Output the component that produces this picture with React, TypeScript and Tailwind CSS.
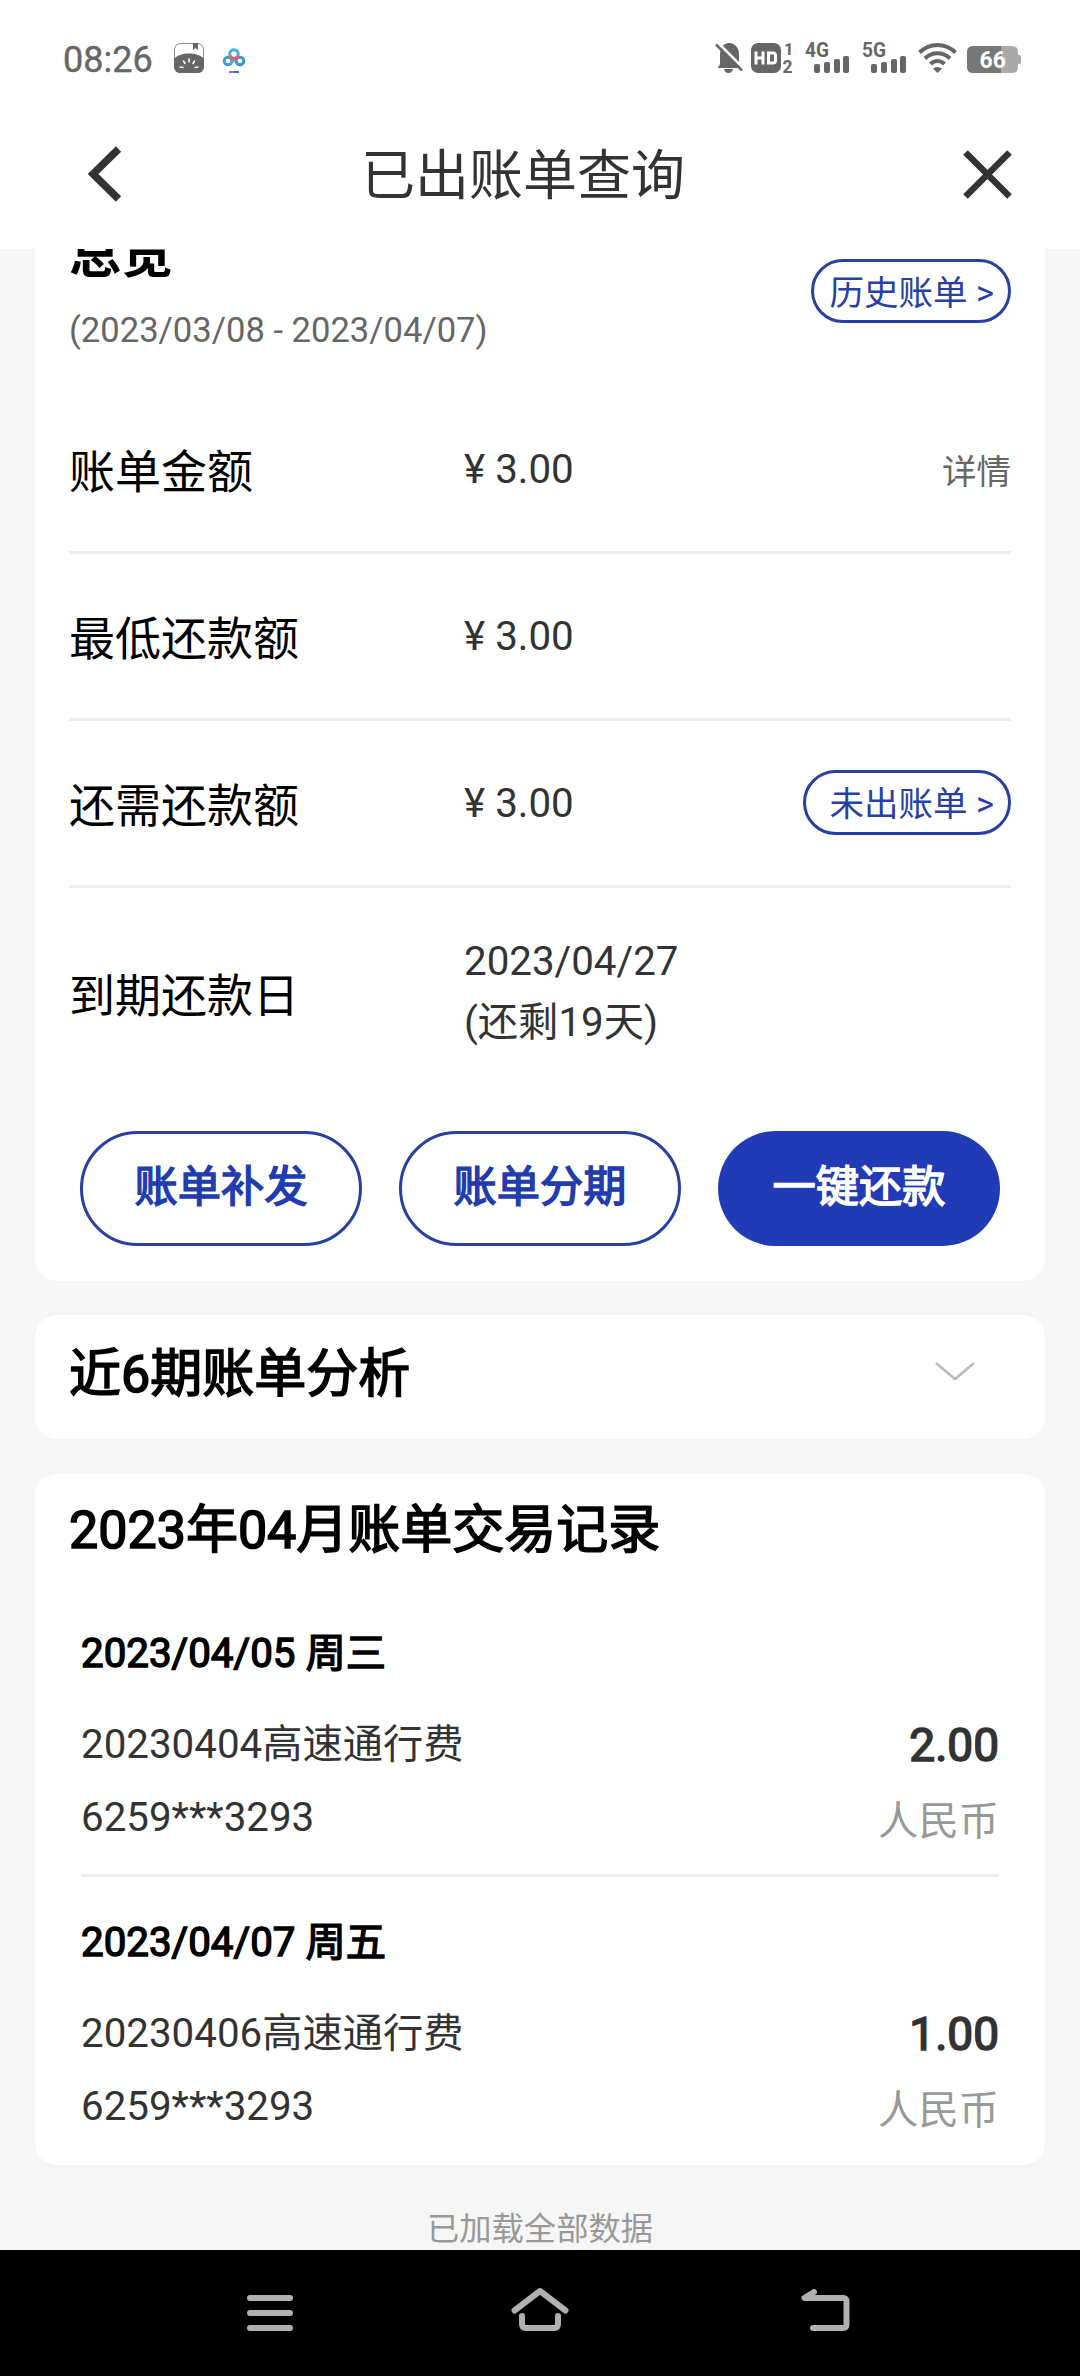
import type { ReactNode } from 'react'

const rows = [
  { label: '账单金额', value: '¥ 3.00', extra: 'detail' },
  { label: '最低还款额', value: '¥ 3.00', extra: '' },
  { label: '还需还款额', value: '¥ 3.00', extra: 'pending' },
]

const records = [
  { date: '2023/04/05 周三', name: '20230404高速通行费', amount: '2.00', card: '6259***3293' },
  { date: '2023/04/07 周五', name: '20230406高速通行费', amount: '1.00', card: '6259***3293' },
]

function Signal({ label }: { label: string }) {
  return (
    <svg className="h-[30px] w-[45px] overflow-visible" viewBox="0 0 45 30" fill="#666">
      <text x="0" y="14" fontSize="19.500" fontWeight="700" fontFamily="Roboto, sans-serif" textLength="24" lengthAdjust="spacingAndGlyphs">{label}</text>
      <rect x="9" y="21" width="6" height="9" rx="2" />
      <rect x="19" y="19" width="6" height="11" rx="2" />
      <rect x="29" y="16" width="6" height="14" rx="2" />
      <rect x="38" y="13" width="6" height="17" rx="2" />
    </svg>
  )
}

function StatusBar() {
  return (
    <div className="flex h-[100px] items-start pl-[63px] pr-[59px] pt-[43px]">
      <span className="mt-[-1px] h-[34px] w-[111px] text-[36px] leading-[36px] text-[#666] [-webkit-text-stroke:0.4px_#666]">08:26</span>
      <svg className="h-[30px] w-[30px]" viewBox="0 0 30 30">
        <rect x="0.5" y="0.5" width="29" height="29" rx="6" fill="#fff" stroke="#888" />
        <path d="M0 16C5 8.500 25 8.500 30 16V24a6 6 0 0 1-6 6H6a6 6 0 0 1-6-6z" fill="#666" />
        <path d="M19 0h5v7l-2.500-2L19 7z" fill="#666" />
        <path d="M15 16v3M9.500 18l1.500 2.500M20.500 18L19 20.500M6 24l3 .5M24 24l-3 .5" stroke="#fff" strokeWidth="1.500" strokeLinecap="round" />
      </svg>
      <svg className="ml-[18px] h-[30px] w-[24px]" viewBox="0 0 24 30" fill="none" strokeWidth="3">
        <circle cx="6" cy="18" r="3.800" stroke="#3aa0d4" />
        <circle cx="18" cy="18" r="3.800" stroke="#3499cf" />
        <path d="M8.500 20.500L15.500 14.500" stroke="#5aa9d6" strokeWidth="2.500" />
        <circle cx="12" cy="11" r="4.300" stroke="#3fb4de" />
        <path d="M7.700 12.500a4.500 4.500 0 0 0 8.600 0" stroke="#e0607c" />
        <path d="M7 29h5" stroke="#d25b7c" strokeWidth="2" />
        <path d="M12 29h5" stroke="#3f6fb0" strokeWidth="2" />
      </svg>
      <div className="flex flex-1 justify-end">
        <svg className="h-[30px] w-[28px]" viewBox="0 0 28 30">
          <path d="M3 24c1.500-1 2-2.500 2-5v-7C5 5 8.500 0 14 0s10 4 10 11v9c0 2 .5 3 1.500 4v1H3zM9 26h9c-.5 2.500-2 4-4.500 4S9.500 28.500 9 26z" fill="#666" />
          <path d="M3 0L29 26" stroke="#fff" strokeWidth="3" />
          <path d="M1 1.500L27 27.500" stroke="#666" strokeWidth="2.500" />
        </svg>
        <svg className="ml-[8px] h-[30px] w-[43px] overflow-visible" viewBox="0 0 43 30" fill="#666">
          <rect width="30" height="30" rx="7" />
          <path d="M5 8.500v13M12 8.500v13M5 15h7M17.500 10h4.500q2.500 0 2.500 2.500v5q0 2.500-2.500 2.500h-4.500z" fill="none" stroke="#fff" strokeWidth="3" />
          <text x="33" y="12" fontSize="16.500" fontWeight="700" fontFamily="Roboto, sans-serif">1</text>
          <text x="31.500" y="29.500" fontSize="17.500" fontWeight="700" fontFamily="Roboto, sans-serif">2</text>
        </svg>
        <div className="ml-[11px]"><Signal label="4G" /></div>
        <div className="ml-[12px]"><Signal label="5G" /></div>
        <svg className="ml-[11px] h-[30px] w-[39px]" viewBox="0 0 39 30" fill="none" stroke="#666" strokeWidth="4">
          <path d="M1.500 9.500C12-.5 27-.5 37.500 9.500" />
          <path d="M7 15.500C14 8.500 25 8.500 32 15.500" />
          <path d="M12.500 21C16.500 17 22.500 17 26.500 21" />
          <path d="M19.500 30l-4.500-4.500q4.500-3 9 0z" fill="#666" stroke="none" />
        </svg>
        <svg className="ml-[10px] mt-[3px] h-[27px] w-[54px]" viewBox="0 0 54 27">
          <path d="M34 0h11q6 0 6 6v3h1q2 0 2 2v5q0 2-2 2h-1v3q0 6-6 6H34z" fill="#aaa" />
          <path d="M6 0h28v27H6q-6 0-6-6V6q0-6 6-6z" fill="#777" />
          <text x="12.500" y="21.500" fontSize="23" fontWeight="700" fontFamily="Roboto, sans-serif" fill="#fff">66</text>
        </svg>
      </div>
    </div>
  )
}

function Header() {
  return (
    <div className="flex h-[149px] items-start pl-[88px] text-[#333]">
      <svg className="mt-[46px] h-[56px] w-[34px]" viewBox="0 0 34 56" fill="none" stroke="#333" strokeWidth="7.500">
        <path d="M30.500 3L5 28L30.500 53" />
      </svg>
      <h1 className="mt-[42px] ml-[239px] w-[324px] text-[54px] leading-[70px]">已出账单查询</h1>
      <svg className="mt-[50px] ml-[278px] h-[49px] w-[49px]" viewBox="0 0 49 49" stroke="#333" strokeWidth="6.500">
        <path d="M2.500 2.500l44 44M46.500 2.500l-44 44" />
      </svg>
    </div>
  )
}

function Pill({ children, className }: { children: ReactNode; className: string }) {
  return (
    <button className={`flex items-center justify-end rounded-full border-[3px] border-[#2740a2] pr-[14px] pt-[4px] text-[34.500px] leading-none text-[#2740a8] ${className}`}>
      {children}
    </button>
  )
}

function Summary() {
  return (
    <section className="h-[1032px] rounded-b-[22px] bg-white px-[34px]">
      <div className="flex h-[138px] items-start justify-between">
        <div>
          <h2 className="mt-[-23px] text-[52px] leading-[60px] font-bold text-black">总览</h2>
          <p className="mt-[20px] text-[34.600px] leading-[48px] text-[#666]">(2023/03/08 - 2023/04/07)</p>
        </div>
        <Pill className="mt-[10px] h-[64px] w-[200px]">历史账单 &gt;</Pill>
      </div>

      {rows.map((row) => (
        <div key={row.label} className="flex h-[167px] items-center border-b-[3px] border-[#eee]">
          <div className="w-[395px] pt-[5px] text-[46px] leading-[60px] text-black">{row.label}</div>
          <div className="flex-1 pt-[2px] text-[40.300px] leading-[60px] text-[#333]">{row.value}</div>
          {row.extra === 'detail' && <span className="pt-[6px] text-[34.500px] leading-[50px] text-[#666]">详情</span>}
          {row.extra === 'pending' && <Pill className="mt-[-1px] h-[65px] w-[208px]">未出账单 &gt;</Pill>}
        </div>
      ))}

      <div className="flex h-[212px] items-center">
        <div className="w-[395px] pt-[3px] text-[46px] leading-[60px] text-black">到期还款日</div>
        <div className="pb-[5px] text-[40.300px] leading-[61px] text-[#333]">
          <p>2023/04/27</p>
          <p>(还剩19天)</p>
        </div>
      </div>

      <div className="mt-[31px] grid grid-cols-3 gap-[37px] px-[11px] text-[43.200px] [-webkit-text-stroke:1.5px_currentColor]">
        <button className="h-[115px] rounded-full border-[3px] border-[#2740a2] text-[#213bb0]">账单补发</button>
        <button className="h-[115px] rounded-full border-[3px] border-[#2740a2] text-[#213bb0]">账单分期</button>
        <button className="h-[115px] rounded-full bg-[#213bb6] text-white">一键还款</button>
      </div>
    </section>
  )
}

function Records() {
  return (
    <section className="mt-[35px] h-[691px] rounded-[22px] bg-white px-[34px] pt-[27px]">
      <h2 className="text-[52px] leading-[60px] text-black [-webkit-text-stroke:1.6px_#000]">2023年04月账单交易记录</h2>
      <div className="mt-[27px] px-[12px]">
        {records.map((r) => (
          <div key={r.date} className="h-[289px] border-b-[3px] border-[#eee] pt-[36px] last:border-0">
            <h3 className="text-[40.300px] leading-[60px] text-black [-webkit-text-stroke:1.4px_#000]">{r.date}</h3>
            <div className="mt-[31px] flex items-center justify-between text-[#333]">
              <span className="text-[40.300px] leading-[60px]">{r.name}</span>
              <span className="text-[46px] leading-[60px] [-webkit-text-stroke:1.6px_#333]">{r.amount}</span>
            </div>
            <div className="mt-[13px] flex h-[60px] items-start justify-between">
              <span className="text-[40.300px] leading-[60px] text-[#333]">{r.card}</span>
              <span className="pt-[4px] text-[40.300px] leading-[60px] text-[#999]">人民币</span>
            </div>
          </div>
        ))}
      </div>
    </section>
  )
}

function NavBar() {
  return (
    <nav className="flex h-[126px] bg-black pl-[247px] pt-[37px]">
      <svg className="h-[46px] w-[46px]" viewBox="0 0 46 46" stroke="#b0b0b0" strokeWidth="6" strokeLinecap="round">
        <path d="M3 11h40M3 26h40M3 41h40" />
      </svg>
      <svg className="ml-[218px] h-[46px] w-[58px]" viewBox="0 0 58 46" fill="none" stroke="#b0b0b0" strokeWidth="6" strokeLinecap="round" strokeLinejoin="round">
        <path d="M3.500 23.500L29 4L54.500 23.500" />
        <path d="M11 29v8q0 4 4 4h28q4 0 4-4v-8" />
      </svg>
      <svg className="ml-[232px] h-[46px] w-[49px]" viewBox="0 0 49 46" fill="none" stroke="#b0b0b0" strokeWidth="6" strokeLinecap="round" strokeLinejoin="round">
        <path d="M13 5L3.500 11H42q3.500 0 3.500 3.500v23q0 3.500-3.500 3.500H12" />
      </svg>
    </nav>
  )
}

export default function App() {
  return (
    <div className="flex h-[2376px] w-[1080px] flex-col overflow-hidden bg-white font-[Roboto,'Noto_Sans_CJK_SC',sans-serif]">
      <StatusBar />
      <Header />

      {/* Scrolled page content, the top is cut by the header */}
      <main className="h-[2001px] overflow-hidden bg-[#f6f6f6] px-[35px]">
        <Summary />

        <section className="mt-[34px] flex h-[124px] items-center justify-between rounded-[22px] bg-white pl-[34px] pr-[69px]">
          <h2 className="mt-[-4px] text-[52px] leading-[60px] text-black [-webkit-text-stroke:1.6px_#000]">近6期账单分析</h2>
          <svg className="mt-[-10px] h-[20px] w-[42px]" viewBox="0 0 42 20" fill="none" stroke="#bbb" strokeWidth="2.500">
            <path d="M2 1l19 16L40 1" />
          </svg>
        </section>

        <Records />

        <p className="mt-[39px] text-center text-[32.300px] leading-[50px] text-[#999]">已加载全部数据</p>
      </main>

      <NavBar />
    </div>
  )
}
